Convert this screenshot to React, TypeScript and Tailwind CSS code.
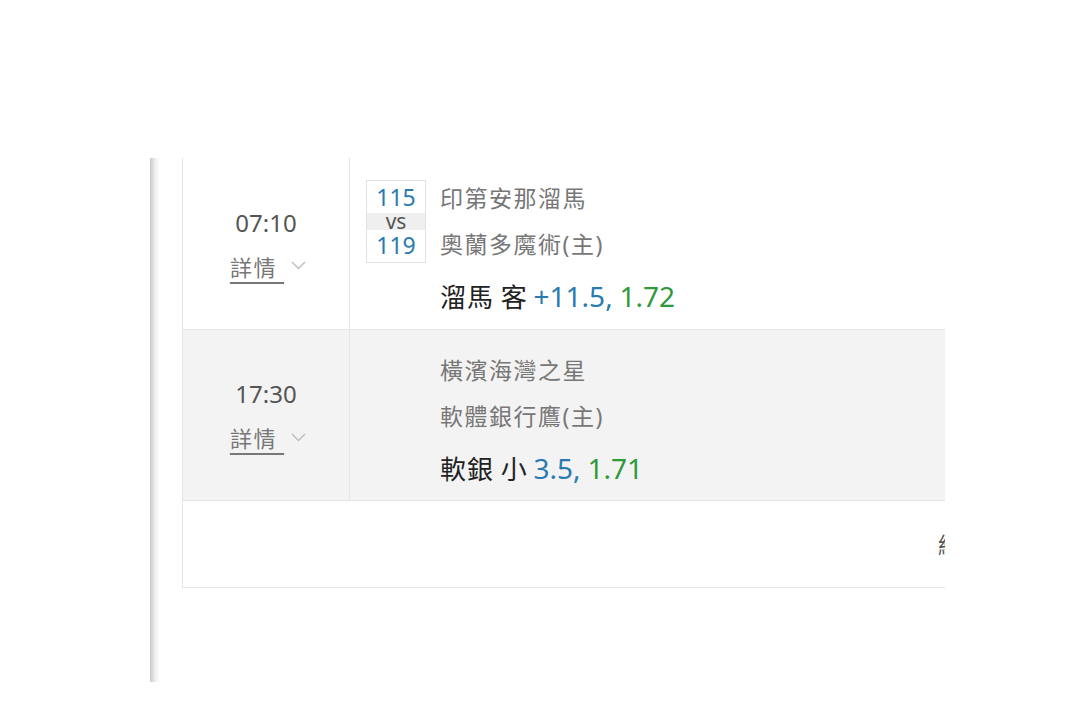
interface Game {
  time: string;
  away: string;
  home: string;
  score?: { away: number; home: number };
  pick: string;
  pickType: string;
  line: string;
  odds: string;
  shaded?: boolean;
}

const games: Game[] = [
  {
    time: "07:10",
    away: "印第安那溜馬",
    home: "奧蘭多魔術(主)",
    score: { away: 115, home: 119 },
    pick: "溜馬",
    pickType: "客",
    line: "+11.5,",
    odds: "1.72",
  },
  {
    time: "17:30",
    away: "橫濱海灣之星",
    home: "軟體銀行鷹(主)",
    pick: "軟銀",
    pickType: "小",
    line: "3.5,",
    odds: "1.71",
    shaded: true,
  },
];

const font = { fontFamily: '"Noto Sans", "Noto Sans CJK TC", sans-serif' };

const GameRow = ({ game, first }: { game: Game; first: boolean }) => {
  return (
    <div
      className={`flex border-b border-[#e6e6e6] ${first ? "h-[172px]" : "h-[171px]"} ${
        game.shaded ? "bg-[#f3f3f3]" : "bg-white"
      }`}
    >
      {/* 時間 & 詳情 */}
      <div className="w-[167px] shrink-0 border-r border-[#e6e6e6] flex flex-col items-center justify-center pt-[2px]">
        <div className="text-[24px] leading-[30px] text-[#555]">{game.time}</div>
        <div className="flex items-center mt-[14px] pl-[4px]">
          <span className="text-[22px] leading-[30px] tracking-[1.5px] text-[#777] underline underline-offset-[6px] decoration-[#777]">
            詳情&nbsp;
          </span>
          <svg width="15" height="9" viewBox="0 0 15 9" className="ml-[7px] shrink-0 mb-[2px]">
            <polyline points="1,1 7.5,7.5 14,1" fill="none" stroke="#bdbdbd" strokeWidth="1.4" />
          </svg>
        </div>
      </div>

      {/* 比分 & 隊伍 */}
      <div className="flex pl-[16px]">
        <div className="w-[60px] shrink-0 pt-[22px]">
          {game.score && (
            <div className="border border-[#e2e2e2] bg-white flex flex-col text-center">
              <div className="h-[32px] leading-[32px] text-[23px] text-[#2a7ab2]">{game.score.away}</div>
              <div className="h-[17px] leading-[17px] text-[21px] text-[#555] bg-[#efefef]">vs</div>
              <div className="h-[32px] leading-[30px] text-[23px] text-[#2a7ab2]">{game.score.home}</div>
            </div>
          )}
        </div>
        <div className="pl-[14px] pt-[17px]">
          <div className="text-[23px] leading-[46px] tracking-[1.5px] text-[#777]">{game.away}</div>
          <div className="text-[23px] leading-[46px] tracking-[1.5px] text-[#777]">{game.home}</div>
          <div className="text-[26px] leading-[58px] text-[#222]">
            <span className="tracking-[1px]">{game.pick}</span> {game.pickType}{" "}
            <span className="text-[28px] text-[#2a7ab2]">{game.line}</span>{" "}
            <span className="text-[28px] text-[#2f9a3a]">{game.odds}</span>
          </div>
        </div>
      </div>
    </div>
  );
};

export default function App() {
  return (
    <div className="w-[1080px] h-[714px] bg-white overflow-hidden" style={font}>
      <div className="flex pt-[158px]">
        {/* 左側分隔線 */}
        <div className="ml-[150px] w-[10px] h-[524px] bg-gradient-to-r from-[#c8c8c8] via-[#efefef] to-white" />

        {/* 賽事表格 */}
        <div className="ml-[22px] w-[763px] overflow-hidden">
          <div className="w-[900px] border-l border-[#e6e6e6]">
            {games.map((g, i) => (
              <GameRow key={g.time} game={g} first={i === 0} />
            ))}
            <div className="h-[87px] border-b border-[#e6e6e6] bg-white flex items-center pl-[755px]">
              <span className="text-[22px] text-[#555]">結束</span>
            </div>
          </div>
        </div>
      </div>
    </div>
  );
}
